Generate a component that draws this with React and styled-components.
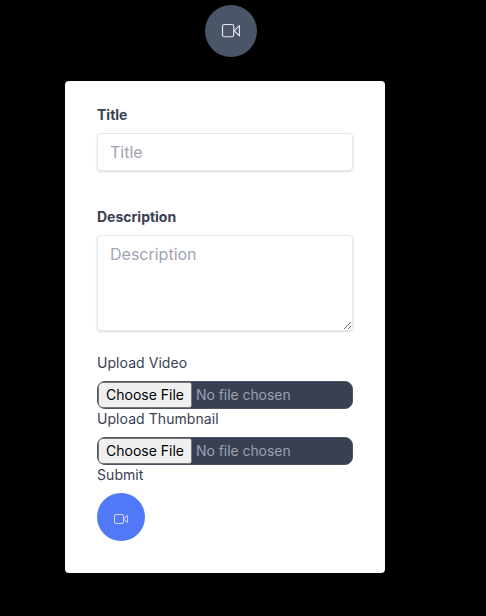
import React from 'react';
import styled, { createGlobalStyle } from 'styled-components';

const Global = createGlobalStyle`
  *, *::before, *::after { box-sizing: border-box; }
  body { margin: 0; background: #000; font-family: Inter, "Liberation Sans", sans-serif; color: #3a4052; }
`;
const Page = styled.main`
  display: flex;
  flex-direction: column;
  align-items: center;
  width: 450px;
  min-height: 616px;
  padding-top: 5px;
`;
const Circle = styled.button`
  display: flex;
  align-items: center;
  justify-content: center;
  flex: none;
  width: ${p => p.$size}px;
  height: ${p => p.$size}px;
  padding: ${p => p.$drop || 0}px 0 0;
  border: 0;
  border-radius: 50%;
  background: ${p => p.$bg};
  color: #e5e7eb;
`;
const Opener = styled.header`
  padding-left: 12px;
  margin-bottom: 24px;
`;
const Card = styled.form`
  width: 320px;
  height: 492px;
  padding: 24px 32px;
  background: #fff;
  border-radius: 4px;
`;
const Label = styled.label`
  display: block;
  font-size: 14px;
  line-height: 20px;
  margin-bottom: ${p => (p.$bold ? 8 : 0)}px;
  font-weight: ${p => (p.$bold ? 700 : 400)};
  letter-spacing: ${p => (p.$bold ? 0 : 0.06)}px;
  color: #3a4052;
`;
const fieldShadow = '0 1px 3px rgba(0,0,0,.1), 0 1px 2px rgba(0,0,0,.06)';
const Input = styled.input`
  display: block;
  width: 100%;
  height: 38px;
  margin-bottom: 36px;
  padding: 8px 12px;
  border: 1px solid #e5e7eb;
  border-radius: 4px;
  box-shadow: ${fieldShadow};
  font: 16px/20px Inter, sans-serif;
  &::placeholder { color: #a0a3b1; }
`;
const Area = styled.textarea`
  display: block;
  width: 100%;
  height: 96px;
  margin-bottom: 22px;
  padding: 8px 12px;
  border: 1px solid #e5e7eb;
  border-radius: 4px;
  box-shadow: ${fieldShadow};
  font: 16px/20px Inter, sans-serif;
  resize: both;
  &::placeholder { color: #a0a3b1; }
`;
const File = styled.input`
  display: block;
  width: 100%;
  height: 28px;
  margin: 8px 0 0;
  border: 1px solid #4b5563;
  border-radius: 8px;
  background: #3a4052;
  color: #98a2b3;
  font: 14px/20px Inter, sans-serif;
  letter-spacing: -0.06px;
  &::file-selector-button {
    height: 26px;
    padding: 0 6px 2px;
    font: inherit;
    letter-spacing: 0;
  }
`;
const Submit = styled.div`
  margin-top: 8px;
`;

function VideoIcon() {
  return (
    <svg width="20" height="20" viewBox="0 0 20 20" fill="none" stroke="currentColor" strokeLinejoin="round">
      <rect x="1.5" y="3.5" width="11.2" height="12.2" rx="1.8" strokeWidth="1.15" />
      <path d="M18.4 4.6L13.2 9.7l5.2 5.2z" strokeWidth="1.15" />
    </svg>
  );
}

function SmallVideoIcon() {
  return (
    <svg width="16" height="16" viewBox="0 0 16 16" fill="none" stroke="currentColor" strokeLinejoin="round">
      <rect x="1.5" y="3.5" width="9" height="9" rx="1.5" strokeWidth="0.9" />
      <path d="M14.4 4.4L10.7 8l3.7 3.6z" strokeWidth="0.9" />
    </svg>
  );
}

export default function App() {
  return (
    <>
      <Global />
      <Page>
        <Opener>
          <Circle type="button" aria-label="Video" $size={52} $bg="#4a5568"><VideoIcon /></Circle>
        </Opener>
        <Card>
          <Label $bold htmlFor="title">Title</Label>
          <Input id="title" placeholder="Title" />
          <Label $bold htmlFor="description">Description</Label>
          <Area id="description" placeholder="Description" />
          <Label htmlFor="video">Upload Video</Label>
          <File id="video" type="file" />
          <Label htmlFor="thumbnail">Upload Thumbnail</Label>
          <File id="thumbnail" type="file" />
          <Label as="div">Submit</Label>
          <Submit>
            <Circle type="button" aria-label="Submit" $size={48} $bg="#5178f6" $drop={4}><SmallVideoIcon /></Circle>
          </Submit>
        </Card>
      </Page>
    </>
  );
}
